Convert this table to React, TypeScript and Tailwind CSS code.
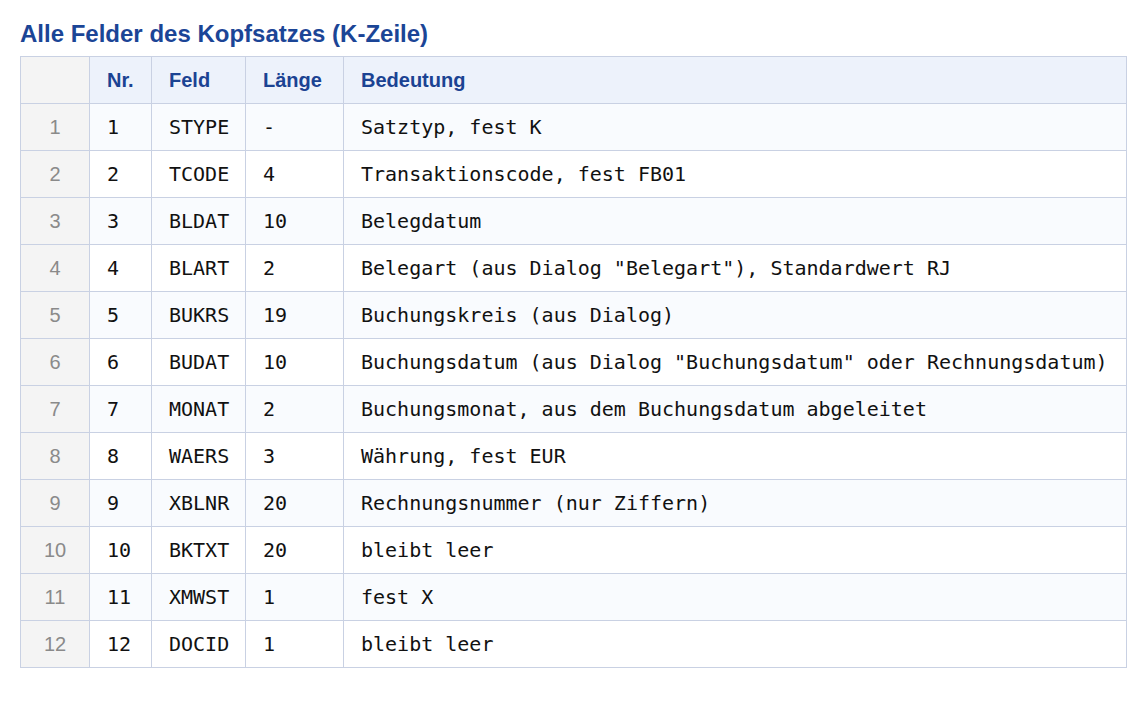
import React from 'react';

const rows: [string, string, string, string][] = [
  ['1', 'STYPE', '-', 'Satztyp, fest K'],
  ['2', 'TCODE', '4', 'Transaktionscode, fest FB01'],
  ['3', 'BLDAT', '10', 'Belegdatum'],
  ['4', 'BLART', '2', 'Belegart (aus Dialog "Belegart"), Standardwert RJ'],
  ['5', 'BUKRS', '19', 'Buchungskreis (aus Dialog)'],
  ['6', 'BUDAT', '10', 'Buchungsdatum (aus Dialog "Buchungsdatum" oder Rechnungsdatum)'],
  ['7', 'MONAT', '2', 'Buchungsmonat, aus dem Buchungsdatum abgeleitet'],
  ['8', 'WAERS', '3', 'Währung, fest EUR'],
  ['9', 'XBLNR', '20', 'Rechnungsnummer (nur Ziffern)'],
  ['10', 'BKTXT', '20', 'bleibt leer'],
  ['11', 'XMWST', '1', 'fest X'],
  ['12', 'DOCID', '1', 'bleibt leer'],
];

const th = 'border border-[#c9d1e3] px-[17px] text-left font-bold text-[20px] text-[#1b4393]';
const td = 'border border-[#c9d1e3] px-[17px] text-[20px] text-[#111]';

export default function App() {
  return (
    <div className="bg-white min-h-screen px-[20px] pt-[19px] font-['Liberation_Sans',Arial,sans-serif]">
      <h2 className="text-[24px] leading-[30px] font-bold text-[#1b4596] mb-[7px]">Alle Felder des Kopfsatzes (K-Zeile)</h2>
      <table className="border-collapse w-[1107px] table-fixed">
        <colgroup>
          <col className="w-[69px]" />
          <col className="w-[62px]" />
          <col className="w-[94px]" />
          <col className="w-[98px]" />
          <col />
        </colgroup>
        <thead>
          <tr className="h-[47px] bg-[#edf2fb]">
            <th className="border border-[#c9d1e3] bg-[#f4f4f4]"></th>
            <th className={th}>Nr.</th>
            <th className={th}>Feld</th>
            <th className={th}>Länge</th>
            <th className={th}>Bedeutung</th>
          </tr>
        </thead>
        <tbody>
          {rows.map((r, i) => (
            <tr key={r[0]} className={`h-[47px] ${i % 2 === 0 ? 'bg-[#f9fbfe]' : 'bg-white'}`}>
              <td className="border border-[#c9d1e3] bg-[#f4f4f4] text-center text-[20px] text-[#8a8a8a]">{i + 1}</td>
              {r.map((c, j) => (
                <td key={j} className={`${td} font-['DejaVu_Sans_Mono',monospace] whitespace-pre`}>{c}</td>
              ))}
            </tr>
          ))}
        </tbody>
      </table>
    </div>
  );
}
